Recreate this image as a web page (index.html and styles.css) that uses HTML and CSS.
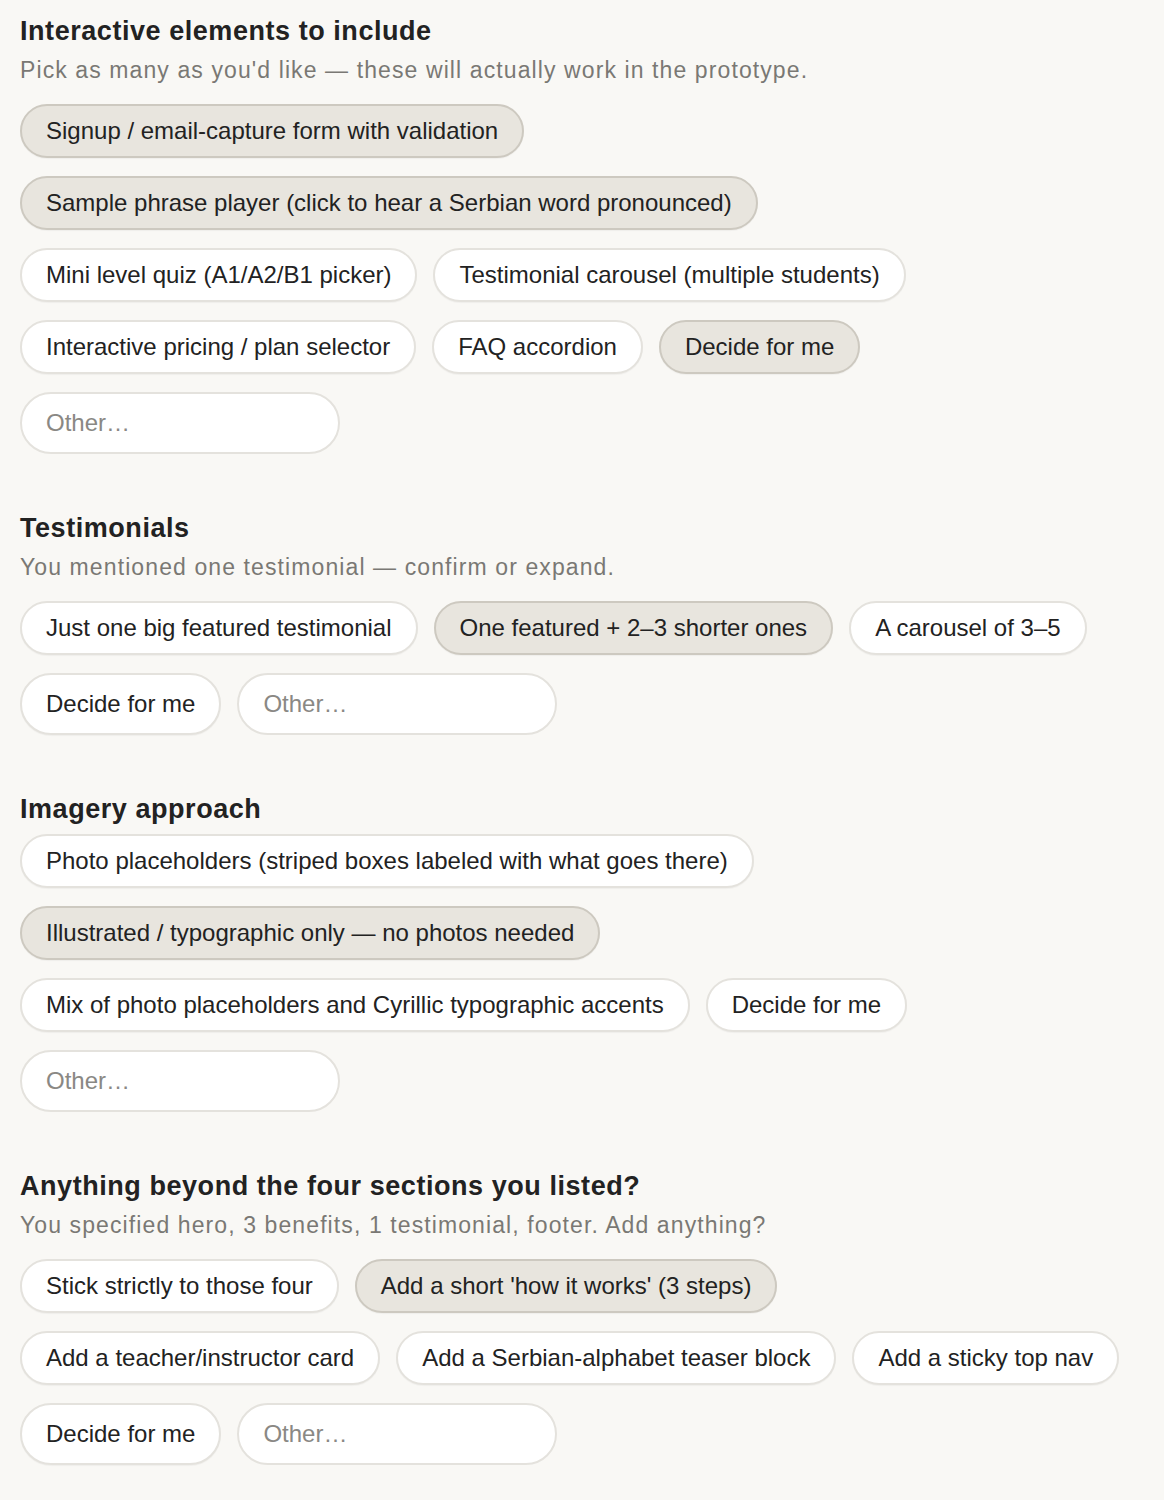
FILE: index.html
```html
<!DOCTYPE html>
<html>
<head>
<meta charset="utf-8">
<link rel="stylesheet" href="styles.css">
</head>
<body>
<main class="page">
  <section class="group">
    <h2 class="title">Interactive elements to include</h2>
    <p class="hint">Pick as many as you'd like — these will actually work in the prototype.</p>
    <div class="chips">
      <span class="chip on">Signup / email-capture form with validation</span>
    </div>
    <div class="chips">
      <span class="chip on">Sample phrase player (click to hear a Serbian word pronounced)</span>
    </div>
    <div class="chips">
      <span class="chip">Mini level quiz (A1/A2/B1 picker)</span>
      <span class="chip">Testimonial carousel (multiple students)</span>
    </div>
    <div class="chips">
      <span class="chip">Interactive pricing / plan selector</span>
      <span class="chip">FAQ accordion</span>
      <span class="chip on">Decide for me</span>
    </div>
    <div class="chips">
      <input class="other" type="text" placeholder="Other…">
    </div>
  </section>

  <section class="group">
    <h2 class="title">Testimonials</h2>
    <p class="hint">You mentioned one testimonial — confirm or expand.</p>
    <div class="chips">
      <span class="chip">Just one big featured testimonial</span>
      <span class="chip on">One featured + 2–3 shorter ones</span>
      <span class="chip">A carousel of 3–5</span>
    </div>
    <div class="chips">
      <span class="chip">Decide for me</span>
      <input class="other" type="text" placeholder="Other…">
    </div>
  </section>

  <section class="group">
    <h2 class="title">Imagery approach</h2>
    <div class="chips">
      <span class="chip">Photo placeholders (striped boxes labeled with what goes there)</span>
    </div>
    <div class="chips">
      <span class="chip on">Illustrated / typographic only — no photos needed</span>
    </div>
    <div class="chips">
      <span class="chip">Mix of photo placeholders and Cyrillic typographic accents</span>
      <span class="chip">Decide for me</span>
    </div>
    <div class="chips">
      <input class="other" type="text" placeholder="Other…">
    </div>
  </section>

  <section class="group">
    <h2 class="title">Anything beyond the four sections you listed?</h2>
    <p class="hint">You specified hero, 3 benefits, 1 testimonial, footer. Add anything?</p>
    <div class="chips">
      <span class="chip">Stick strictly to those four</span>
      <span class="chip on">Add a short 'how it works' (3 steps)</span>
    </div>
    <div class="chips">
      <span class="chip">Add a teacher/instructor card</span>
      <span class="chip">Add a Serbian-alphabet teaser block</span>
      <span class="chip">Add a sticky top nav</span>
    </div>
    <div class="chips">
      <span class="chip">Decide for me</span>
      <input class="other" type="text" placeholder="Other…">
    </div>
  </section>
</main>
</body>
</html>
```

FILE: styles.css
```css
* { box-sizing: border-box; }
html, body {
  margin: 0;
  padding: 0;
  background: #f9f8f5;
}
body {
  font-family: "Liberation Sans", Arial, sans-serif;
  color: #222;
}
.page {
  padding: 15px 20px 30px;
  display: flex;
  flex-direction: column;
  gap: 58px;
}
.group {
  display: flex;
  flex-direction: column;
}
.title {
  margin: 0 0 9px;
  font-size: 27px;
  line-height: 32px;
  font-weight: 700;
  letter-spacing: 0.55px;
  color: #222;
}
.hint {
  margin: 0 0 20px;
  font-size: 23px;
  line-height: 28px;
  color: #7a7874;
  letter-spacing: 1.1px;
}
.chips {
  display: flex;
  flex-wrap: wrap;
  column-gap: 16px;
  row-gap: 18px;
  margin-bottom: 18px;
}
.chips:last-child { margin-bottom: 0; }
.chip {
  display: inline-flex;
  align-items: center;
  padding: 12px 24px;
  font-size: 24px;
  line-height: 26px;
  border: 2px solid #e4e2dd;
  border-radius: 999px;
  background: #fff;
  color: #222;
  box-shadow: 0 1px 1px rgba(0,0,0,0.04);
  white-space: nowrap;
}
.chip.on {
  background: #e8e5de;
  border-color: #cdc9c0;
}
.other {
  width: 320px;
  height: 62px;
  padding: 0 24px;
  font-family: "Liberation Sans", Arial, sans-serif;
  font-size: 24px;
  color: #222;
  border: 2px solid #e4e2dd;
  border-radius: 999px;
  background: #fff;
  outline: none;
}
.other::placeholder { color: #8a8884; }
```
